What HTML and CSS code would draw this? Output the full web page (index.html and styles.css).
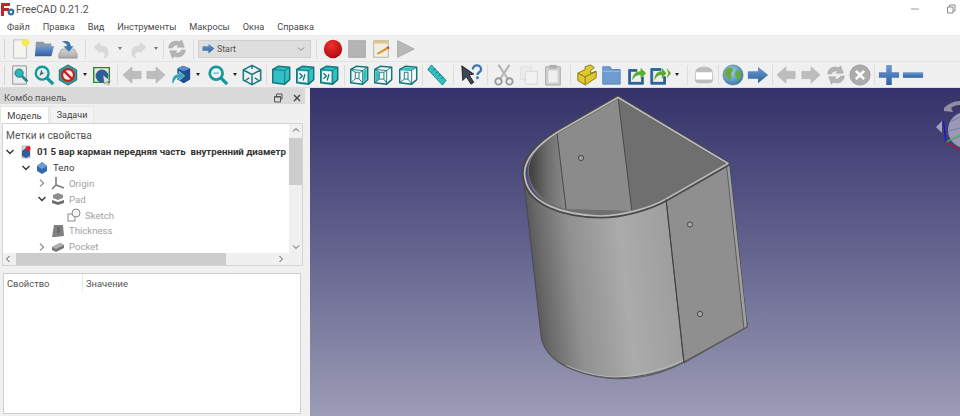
FILE: index.html
```html
<!DOCTYPE html>
<html lang="ru">
<head>
<meta charset="utf-8">
<title>FreeCAD 0.21.2</title>
<link rel="stylesheet" href="styles.css">
</head>
<body>
<svg class="defs" width="0" height="0" aria-hidden="true">
  <defs>
    <linearGradient id="gBlue" x1="0" y1="0" x2="0" y2="1"><stop offset="0" stop-color="#6f9bd0"/><stop offset="1" stop-color="#2f5f9f"/></linearGradient>
    <linearGradient id="gGray" x1="0" y1="0" x2="0" y2="1"><stop offset="0" stop-color="#d4d4d4"/><stop offset="1" stop-color="#a8a8a8"/></linearGradient>
    <linearGradient id="gTeal" x1="0" y1="0" x2="1" y2="1"><stop offset="0" stop-color="#45d0d4"/><stop offset="1" stop-color="#1c9ba0"/></linearGradient>
    <radialGradient id="gRed" cx=".4" cy=".3" r=".8"><stop offset="0" stop-color="#f03030"/><stop offset="1" stop-color="#a80808"/></radialGradient>
    <radialGradient id="gGlobe" cx=".4" cy=".35" r=".75"><stop offset="0" stop-color="#a9d3ef"/><stop offset="1" stop-color="#2c6fa8"/></radialGradient>
    <linearGradient id="body" gradientUnits="userSpaceOnUse" x1="524" y1="280" x2="690" y2="262">
      <stop offset="0" stop-color="#4a4a4a"/><stop offset=".12" stop-color="#6a6a6a"/><stop offset=".3" stop-color="#909090"/><stop offset=".6" stop-color="#ababab"/><stop offset="1" stop-color="#9a9a9a"/>
    </linearGradient>
    <linearGradient id="inner" gradientUnits="userSpaceOnUse" x1="528" y1="170" x2="566" y2="170">
      <stop offset="0" stop-color="#3a3a3a"/><stop offset=".5" stop-color="#6c6c6c"/><stop offset="1" stop-color="#8c8c8c"/>
    </linearGradient>
    <linearGradient id="sky" x1="0" y1="0" x2="0" y2="1"><stop offset="0" stop-color="#35316a"/><stop offset=".5" stop-color="#65648f"/><stop offset="1" stop-color="#9c9cb6"/></linearGradient>

    <symbol id="i-new" viewBox="0 0 24 24"><path d="M5 2h14v20H5z" fill="#f4f4f0" stroke="#bdbdbd"/><circle cx="18" cy="5" r="4" fill="#f5ea4e"/></symbol>
    <symbol id="i-open" viewBox="0 0 24 24"><path d="M3 4h8l2 2h7v4H3z" fill="#8c9aa8"/><path d="M3 9h20l-3 11H2z" fill="url(#gBlue)"/></symbol>
    <symbol id="i-save" viewBox="0 0 24 24"><path d="M5 12h14l3 6v4H2v-4z" fill="url(#gGray)" stroke="#8e8e8e" stroke-width=".6"/><path d="M5 4c6-2 10 0 10 5h3l-5 6-6-6h4c0-3-3-4-6-5z" fill="#3c78b8"/></symbol>
    <symbol id="i-undo" viewBox="0 0 24 24"><path d="M3 10l7-6v4c6 0 10 3 9 10-1 3-3 4-5 4 2-3 1-7-4-7v2z" fill="#d8d8d8"/></symbol>
    <symbol id="i-redo" viewBox="0 0 24 24"><path d="M21 10l-7-6v4c-6 0-10 3-9 10 1 3 3 4 5 4-2-3-1-7 4-7v2z" fill="#d8d8d8"/></symbol>
    <symbol id="i-sync" viewBox="0 0 24 24"><path d="M3 11C3 5 9 2 15 4l2-2 3 8h-8l2-2c-3-1-6 0-7 3zM21 13c0 6-6 9-12 7l-2 2-3-8h8l-2 2c3 1 6 0 7-3z" fill="#b4b4b4" stroke="#9c9c9c" stroke-width=".5"/></symbol>
    <symbol id="i-rec" viewBox="0 0 24 24"><circle cx="12" cy="12" r="10" fill="url(#gRed)"/></symbol>
    <symbol id="i-stop" viewBox="0 0 24 24"><rect x="3" y="3" width="18" height="18" fill="#b4b4b4" stroke="#a4a4a4"/></symbol>
    <symbol id="i-macro" viewBox="0 0 24 24"><path d="M4 3h16v18H4z" fill="#f1efe4" stroke="#b5b09a"/><path d="M4 3h16v3H4z" fill="#d9c98a"/><path d="M7 17l11-7 2 2-11 6z" fill="#d8913a"/><path d="M18 10l2 2 1.500-1-2-2z" fill="#c8382c"/></symbol>
    <symbol id="i-play" viewBox="0 0 24 24"><path d="M4 3l18 9-18 9z" fill="#b8b8b8" stroke="#a6a6a6"/></symbol>
    <symbol id="i-fit" viewBox="0 0 24 24"><path d="M4 2h15v20H4z" fill="#ececec" stroke="#8f8f8f"/><circle cx="11" cy="10" r="4.500" fill="#29b4b8" stroke="#127a80"/><path d="M14 13l6 6" stroke="#1a8a90" stroke-width="3"/></symbol>
    <symbol id="i-fitsel" viewBox="0 0 24 24"><circle cx="10" cy="10" r="7" fill="#dff3f3" stroke="#16989c" stroke-width="2.600"/><path d="M15 15l7 7" stroke="#16989c" stroke-width="3.500"/><path d="M7 13l2-7 2 4 3-1z" fill="#666"/></symbol>
    <symbol id="i-draw" viewBox="0 0 24 24"><path d="M12 1l9.500 5.500v11L12 23l-9.500-5.500v-11z" fill="#2aa0a4" stroke="#12666a"/><circle cx="12" cy="12" r="6.500" fill="#eee" stroke="#c81f1f" stroke-width="2.400"/><path d="M7.500 7.500l9 9" stroke="#c81f1f" stroke-width="2.400"/></symbol>
    <symbol id="i-cubeg" viewBox="0 0 24 24"><path d="M3 4h17v16H3z" fill="#dff0df" stroke="#1f8a2c" stroke-width="1.500"/><circle cx="12" cy="13" r="7" fill="#2c5f9a"/><path d="M13 12l8 6-3 1 2 3-1.500 1-2-3-2 2z" fill="#ddd" stroke="#555" stroke-width=".5"/></symbol>
    <symbol id="i-left" viewBox="0 0 24 24"><path d="M2 12l10-9v5h10v8H12v5z" fill="#bdbdbd" stroke="#adadad" stroke-width=".5"/></symbol>
    <symbol id="i-right" viewBox="0 0 24 24"><path d="M22 12L12 3v5H2v8h10v5z" fill="#bdbdbd" stroke="#adadad" stroke-width=".5"/></symbol>
    <symbol id="i-bcube" viewBox="0 0 24 24"><path d="M8 5l6-3 8 3v12l-7 4-7-4z" fill="#1f4f8f"/><path d="M8 5l7 3 7-3-8-3z" fill="#5b8ec8"/><path d="M2 21c0-7 3-10 8-10V8l6 5-6 5v-3c-3 0-5 2-6 6z" fill="#2fa6b8" stroke="#fff" stroke-width=".5"/></symbol>
    <symbol id="i-cyc" viewBox="0 0 24 24"><circle cx="10" cy="10" r="7" fill="none" stroke="#16989c" stroke-width="3"/><path d="M15 15l7 7" stroke="#16989c" stroke-width="3.500"/><path d="M7 10h6" stroke="#7fd0d2" stroke-width="2"/></symbol>
    <symbol id="i-iso" viewBox="0 0 24 24"><path d="M12 1.500l9.500 5v11l-9.500 5-9.500-5v-11zM2.500 6.500l9.500 5 9.500-5M12 11.500v11M12 1.500v4M5 18l4-3M19 18l-4-3" fill="none" stroke="#1d7f84" stroke-width="1.700"/></symbol>
    <symbol id="i-front" viewBox="0 0 24 24"><path d="M3 6L9 2.500 21.500 3.500V17L16 22 3 20.500Z" fill="#33c0c4" stroke="#15757a" stroke-width="1.600" stroke-linejoin="round"/><path d="M3 6L16 7 21.500 3.500M16 7V22" fill="none" stroke="#15757a"/></symbol>
    <symbol id="i-top" viewBox="0 0 24 24"><path d="M3 6L9 2.500 21.500 3.500V17L16 22 3 20.500Z" fill="#33c0c4" stroke="#15757a" stroke-width="1.600" stroke-linejoin="round"/><path d="M3 6L16 7 21.500 3.500M16 7V22" fill="none" stroke="#15757a"/><path d="M4.500 7.500l10 .7v12l-10-1z" fill="#f4fbfb"/><path d="M6 10l3 3-3 3M12 11l-2 7" stroke="#15757a" stroke-width="1.500" fill="none"/></symbol>
    <symbol id="i-right2" viewBox="0 0 24 24"><path d="M3 6L9 2.500 21.500 3.500V17L16 22 3 20.500Z" fill="#f4fbfb" stroke="#15757a" stroke-width="1.600" stroke-linejoin="round"/><path d="M3 6L16 7 21.500 3.500M16 7V22" fill="none" stroke="#15757a"/><path d="M16.500 8l4-3v11l-4 4z" fill="#33c0c4"/><path d="M3 6l5 3v7l-5 4.500M16 7l-4 3v6l4 5M8 9h4M8 16h4" fill="none" stroke="#15757a"/></symbol>
    <symbol id="i-rear" viewBox="0 0 24 24"><path d="M3 6L9 2.500 21.500 3.500V17L16 22 3 20.500Z" fill="#f4fbfb" stroke="#15757a" stroke-width="1.600" stroke-linejoin="round"/><path d="M3 6L16 7 21.500 3.500M16 7V22" fill="none" stroke="#15757a"/><path d="M4 7l5-3.500 11.500 1-4 1.800z" fill="#33c0c4"/><path d="M3 20.500l5-4h4l4 5M8 16.500V9h4v7.500" fill="none" stroke="#15757a"/></symbol>
    <symbol id="i-bottom" viewBox="0 0 24 24"><path d="M3 6L9 2.500 21.500 3.500V17L16 22 3 20.500Z" fill="#f4fbfb" stroke="#15757a" stroke-width="1.600" stroke-linejoin="round"/><path d="M3 6L16 7 21.500 3.500M16 7V22" fill="none" stroke="#15757a"/><path d="M4 7.500l3.500 2v7L4 19.500z" fill="#33c0c4"/><path d="M8 9h5v7.500H8zM3 6l5 3M16 7l-3 2M3 20.500l5-4M16 21l-3-4.500" fill="none" stroke="#15757a"/></symbol>
    <symbol id="i-rule" viewBox="0 0 24 24"><path d="M7 1l16 17-4 5L3 6z" fill="#35bcc0" stroke="#17868a"/><path d="M9 7l2-2M12 10l2-2M15 13l2-2M18 16l2-2" stroke="#0e5f62"/></symbol>
    <symbol id="i-what" viewBox="0 0 24 24"><path d="M2 2l13 9-5 1 5 8-3 2-5-8-4 4z" fill="#3b4754" stroke="#222"/><path d="M14 6c0-6 9-6 9 0 0 3-4 3-4 6" fill="none" stroke="#3f74b4" stroke-width="2.500"/><circle cx="19" cy="15" r="1.600" fill="#3f74b4"/></symbol>
    <symbol id="i-cut" viewBox="0 0 24 24"><path d="M6 1l10 15M18 1L8 16" stroke="#b4b4b4" stroke-width="2.200"/><circle cx="6" cy="19" r="3.500" fill="none" stroke="#9a9a9a" stroke-width="2"/><circle cx="18" cy="19" r="3.500" fill="none" stroke="#9a9a9a" stroke-width="2"/></symbol>
    <symbol id="i-copy" viewBox="0 0 24 24"><path d="M3 3h12v14H3z" fill="#ececec" stroke="#dedede"/><path d="M8 8h13v14H8z" fill="#f2f2f2" stroke="#d6d6d6"/></symbol>
    <symbol id="i-paste" viewBox="0 0 24 24"><path d="M4 3h16v20H4z" fill="#cfcfcf" stroke="#a8a8a8"/><path d="M8 1h8v4H8z" fill="#b0b0b0"/><path d="M7 7h10v13H7z" fill="#f0f0f0"/></symbol>
    <symbol id="i-part" viewBox="0 0 24 24"><path d="M2 10l8-4v-3l6-2 4 3-4 3v3l6-2v7l-12 8-8-5z" fill="#e0c92f" stroke="#7f7218"/><path d="M2 10l8 4 12-6M10 14v8" fill="none" stroke="#7f7218"/></symbol>
    <symbol id="i-fold" viewBox="0 0 24 24"><path d="M3 3h8l2 3h9v16H3z" fill="#6f9bd0" stroke="#5c85b5"/><path d="M3 8h19" stroke="#9dbfe4"/></symbol>
    <symbol id="i-link" viewBox="0 0 24 24"><path d="M4 6h9v2H6v12h12v-6h2v8H4z" fill="#2c6296" stroke="#2c6296"/><path d="M8 18c0-7 4-10 9-10V4l6 6-6 6v-4c-4 0-7 2-9 6z" fill="#5cab32"/></symbol>
    <symbol id="i-link2" viewBox="0 0 24 24"><path d="M2 5h11v2H4v13h12v-6h2v8H2z" fill="#2c6296" stroke="#2c6296"/><path d="M6 18c0-7 3-10 8-10V4l5 6-5 6v-4c-4 0-6 2-8 6z" fill="#5cab32"/><path d="M19 4l5 6-5 6 2-6z" fill="#5cab32"/></symbol>
    <symbol id="i-win" viewBox="0 0 24 24"><path d="M2 12C2 5 6 3 12 3s10 2 10 9v5c0 3-2 4-4 4H6c-2 0-4-1-4-4z" fill="#bdbdbd"/><rect x="3" y="9" width="18" height="8" fill="#fff"/></symbol>
    <symbol id="i-globe" viewBox="0 0 24 24"><circle cx="12" cy="12" r="11" fill="url(#gGlobe)" stroke="#4d6d80" stroke-width=".6"/><path d="M6 5c3-2 5-1 6 1 0 3-2 3-2 6 1 3-1 5-2 6-1-3-4-4-5-7 0-2 1-4 3-6zM15 8c3-2 5 0 6 3 0 4-2 7-4 8-1-2 0-4-1-5-2-1-3-3-1-6z" fill="#69ab3a"/></symbol>
    <symbol id="i-barrow" viewBox="0 0 24 24"><path d="M23 12L12 3v5H1v8h11v5z" fill="url(#gBlue)"/></symbol>
    <symbol id="i-xgray" viewBox="0 0 24 24"><circle cx="12" cy="12" r="11" fill="#acacac" stroke="#9c9c9c"/><path d="M7.500 7.500l9 9M16.500 7.500l-9 9" stroke="#fff" stroke-width="3"/></symbol>
    <symbol id="i-plus" viewBox="0 0 24 24"><path d="M9 1h6v8h8v6h-8v8H9v-8H1V9h8z" fill="url(#gBlue)"/></symbol>
    <symbol id="i-minus" viewBox="0 0 24 24"><rect x="1" y="9" width="22" height="6" fill="url(#gBlue)"/></symbol>

    <symbol id="t-doc" viewBox="0 0 14 14"><path d="M3 1h8v12H3z" fill="#d8d8d8" stroke="#9a9a9a" stroke-width=".6"/><path d="M3 6l4-3 4 3v5l-4 2-4-2z" fill="#2b5f9e"/><circle cx="9" cy="3.500" r="2.500" fill="#d8232a"/></symbol>
    <symbol id="t-body" viewBox="0 0 14 14"><path d="M2 5l5-4 5 4v5l-5 3-5-3z" fill="#2f6bb0"/><path d="M2 5l5 3 5-3-5-4z" fill="#6a9ed6"/></symbol>
    <symbol id="t-origin" viewBox="0 0 14 14"><path d="M5 1v8M5 9l8 3M5 9l-4 4" fill="none" stroke="#777" stroke-width="1.500"/></symbol>
    <symbol id="t-pad" viewBox="0 0 14 14"><path d="M2 3l5-2 5 2v3l-5 2-5-2z" fill="#8d8d8d"/><path d="M1 8l6 2 6-2v3l-6 2-6-2z" fill="#6e6e6e"/></symbol>
    <symbol id="t-sketch" viewBox="0 0 14 14"><rect x="1" y="6" width="7" height="7" fill="none" stroke="#8a8a8a"/><circle cx="9" cy="5" r="4" fill="#f4f4f4" stroke="#8a8a8a"/></symbol>
    <symbol id="t-thick" viewBox="0 0 14 14"><path d="M3 1h9l1 11-9 1H1z" fill="#808080"/><path d="M6 3h3v6H6z" fill="#6a6a6a"/></symbol>
    <symbol id="t-pocket" viewBox="0 0 14 14"><path d="M1 7l8-4 4 2v3l-8 4-4-2z" fill="#777"/><path d="M1 7l4 2 8-4-4-2z" fill="#b0b0b0"/></symbol>
  </defs>
</svg>

<div class="app">
  <header class="titlebar">
    <svg class="logo" viewBox="0 0 14 14"><path d="M0 1h9v3H3v2h5v3H3v5H0z" fill="#c4232b"/><circle cx="10" cy="10" r="3.400" fill="#3c6f9e"/><circle cx="10" cy="10" r="1.200" fill="#fff"/></svg>
    <span class="title">FreeCAD 0.21.2</span>
    <span class="winbtns">
      <svg class="wb" viewBox="0 0 10 10"><path d="M1 5h8" stroke="#9a9a9a"/></svg>
      <svg class="wb" viewBox="0 0 10 10"><path d="M1.500 3h5.500v6H1.500zM3.500 3V1H9v6H7" fill="none" stroke="#8a8a8a"/></svg>
    </span>
  </header>

  <nav class="menubar">
    <span>Файл</span><span>Правка</span><span>Вид</span><span>Инструменты</span><span>Макросы</span><span>Окна</span><span>Справка</span>
  </nav>

  <div class="toolbar tb1">
    <i class="grip"></i>
    <svg class="ic"><use href="#i-new"/></svg>
    <svg class="ic"><use href="#i-open"/></svg>
    <svg class="ic"><use href="#i-save"/></svg>
    <i class="sep s1"></i>
    <svg class="ic"><use href="#i-undo"/></svg>
    <i class="drop dim"></i>
    <svg class="ic g1"><use href="#i-redo"/></svg>
    <i class="drop dim"></i>
    <i class="sep s2"></i>
    <svg class="ic"><use href="#i-sync"/></svg>
    <i class="sep s3"></i>
    <div class="combo">
      <svg class="cmb-ic" viewBox="0 0 24 24"><use href="#i-barrow"/></svg>
      <span>Start</span>
      <svg class="cmb-ch" viewBox="0 0 10 10"><path d="M2 3.500l3 3 3-3" fill="none" stroke="#888"/></svg>
    </div>
    <i class="sep s4"></i>
    <svg class="ic"><use href="#i-rec"/></svg>
    <svg class="ic"><use href="#i-stop"/></svg>
    <svg class="ic"><use href="#i-macro"/></svg>
    <svg class="ic"><use href="#i-play"/></svg>
  </div>

  <div class="toolbar tb2">
    <i class="grip"></i>
    <svg class="ic"><use href="#i-fit"/></svg>
    <svg class="ic"><use href="#i-fitsel"/></svg>
    <svg class="ic"><use href="#i-draw"/></svg>
    <i class="drop"></i>
    <svg class="ic"><use href="#i-cubeg"/></svg>
    <i class="sep w6"></i>
    <svg class="ic"><use href="#i-left"/></svg>
    <svg class="ic"><use href="#i-right"/></svg>
    <svg class="ic g1"><use href="#i-bcube"/></svg>
    <i class="drop"></i>
    <i class="sep w3 off"></i>
    <svg class="ic"><use href="#i-cyc"/></svg>
    <i class="drop"></i>
    <svg class="ic"><use href="#i-iso"/></svg>
    <i class="sep w5"></i>
    <svg class="ic"><use href="#i-front"/></svg>
    <svg class="ic"><use href="#i-top"/></svg>
    <svg class="ic"><use href="#i-top"/></svg>
    <i class="sep w6"></i>
    <svg class="ic"><use href="#i-right2"/></svg>
    <svg class="ic"><use href="#i-bottom"/></svg>
    <svg class="ic g1"><use href="#i-rear"/></svg>
    <i class="sep w4"></i>
    <svg class="ic"><use href="#i-rule"/></svg>
    <i class="sep w11"></i>
    <svg class="ic"><use href="#i-what"/></svg>
    <i class="sep w9"></i>
    <svg class="ic"><use href="#i-cut"/></svg>
    <svg class="ic g1"><use href="#i-copy"/></svg>
    <svg class="ic"><use href="#i-paste"/></svg>
    <i class="sep w10"></i>
    <svg class="ic"><use href="#i-part"/></svg>
    <svg class="ic"><use href="#i-fold"/></svg>
    <svg class="ic g1"><use href="#i-link"/></svg>
    <svg class="ic"><use href="#i-link2"/></svg>
    <i class="drop"></i>
    <i class="sep w10"></i>
    <svg class="ic"><use href="#i-win"/></svg>
    <i class="sep w5"></i>
    <svg class="ic"><use href="#i-globe"/></svg>
    <svg class="ic g1"><use href="#i-barrow"/></svg>
    <i class="sep w4"></i>
    <svg class="ic"><use href="#i-left"/></svg>
    <svg class="ic g1"><use href="#i-right"/></svg>
    <svg class="ic g1"><use href="#i-sync"/></svg>
    <svg class="ic"><use href="#i-xgray"/></svg>
    <i class="sep w5"></i>
    <svg class="ic"><use href="#i-plus"/></svg>
    <svg class="ic"><use href="#i-minus"/></svg>
  </div>

  <main class="workspace">
    <aside class="panel">
      <div class="dock-head">
        <span>Комбо панель</span>
        <span class="dock-btns">
          <svg class="db" viewBox="0 0 10 10"><path d="M1.500 3.500h6v5.500h-6zM3.500 3.500V1H9v5H7.500" fill="none" stroke="#555"/><path d="M1.500 4h6" stroke="#555"/></svg>
          <svg class="db" viewBox="0 0 10 10"><path d="M2 2l6 6M8 2l-6 6" stroke="#444" stroke-width="1.400"/></svg>
        </span>
      </div>
      <div class="tabs">
        <span class="tab on">Модель</span>
        <span class="tab">Задачи</span>
      </div>
      <section class="treebox">
        <div class="tree">
          <div class="tree-head">Метки и свойства</div>
          <div class="row l0"><svg class="chev" viewBox="0 0 10 10"><path d="M1.500 3l3.500 3.500L8.500 3" /></svg><svg class="ti"><use href="#t-doc"/></svg><b>01 5 вар карман передняя часть  внутренний диаметр</b></div>
          <div class="row l1"><svg class="chev" viewBox="0 0 10 10"><path d="M1.500 3l3.500 3.500L8.500 3" /></svg><svg class="ti"><use href="#t-body"/></svg><span>Тело</span></div>
          <div class="row l2 dim"><svg class="chev lite" viewBox="0 0 10 10"><path d="M3 1.500L6.500 5 3 8.500" /></svg><svg class="ti"><use href="#t-origin"/></svg><span>Origin</span></div>
          <div class="row l2 dim"><svg class="chev" viewBox="0 0 10 10"><path d="M1.500 3l3.500 3.500L8.500 3" /></svg><svg class="ti"><use href="#t-pad"/></svg><span>Pad</span></div>
          <div class="row l3 dim"><i class="chev"></i><svg class="ti"><use href="#t-sketch"/></svg><span>Sketch</span></div>
          <div class="row l2 dim"><i class="chev"></i><svg class="ti"><use href="#t-thick"/></svg><span>Thickness</span></div>
          <div class="row l2 dim"><svg class="chev lite" viewBox="0 0 10 10"><path d="M3 1.500L6.500 5 3 8.500" /></svg><svg class="ti"><use href="#t-pocket"/></svg><span>Pocket</span></div>
        </div>
        <div class="vscroll">
          <svg class="sa" viewBox="0 0 10 10"><path d="M2 6.500l3-3 3 3" /></svg>
          <div class="vtrack"><div class="vthumb"></div></div>
          <svg class="sa" viewBox="0 0 10 10"><path d="M2 3.500l3 3 3-3" /></svg>
        </div>
        <div class="hscroll">
          <svg class="sa" viewBox="0 0 10 10"><path d="M6.500 2l-3 3 3 3" /></svg>
          <div class="hthumb"></div>
          <svg class="sa end" viewBox="0 0 10 10"><path d="M3.500 2l3 3-3 3" /></svg>
        </div>
        <div class="corner"></div>
      </section>
      <section class="props">
        <div class="props-head"><span class="c1">Свойство</span><span class="c2">Значение</span></div>
      </section>
    </aside>
    <svg class="viewer" viewBox="310 88 650 328" preserveAspectRatio="none">
      <rect x="310" y="88" width="650" height="328" fill="url(#sky)"/>
      <!-- solid body -->
      <path d="M523 173 L541 336 C543 352 556 362 572 369 C592 377 612 379 632 377 C650 375 668 370 684 362 L747 327 L729 163 L666 199 C650 208 622 216 600 215 C570 214 530 206 523 173Z" fill="url(#body)" stroke="#444" stroke-width=".8"/>
      <path d="M666 199 L684 363 L747 327 L729 163Z" fill="#8f8f8f" stroke="#444" stroke-width=".8"/>
      <path d="M729 163 L747 327 L744 329 L726 165Z" fill="#a0a0a0"/>
      <path d="M726.500 165 L744 329" stroke="#4a4a4a" stroke-width=".8" fill="none"/>
      <path d="M542 340 C546 354 558 364 574 370 C594 378 614 380 634 378 C652 376 670 370 684 362 L747 327 L748 322" fill="none" stroke="#5a5a5a" stroke-width="1.200"/>
      <path d="M566 365 C578 371 594 376 614 377 C634 377 660 371 684 360" fill="none" stroke="#c4c4c4" stroke-width=".7"/>
      <!-- interior -->
      <path d="M557 133 L618 97 L729 163 L666 199 C650 208 622 216 600 215 C566 214 530 206 528 172 C527 156 540 143 557 133Z" fill="#6f6f6f"/>
      <path d="M557 133 L618 97 L632 211 L566 209Z" fill="#8b8b8b"/>
      <path d="M557 133 L566 209 C544 202 530 190 529 172 C528 156 542 142 557 133Z" fill="url(#inner)"/>
      <path d="M618 97 L632 212M557 133 L566 209" stroke="#3a3a3a" stroke-width=".8" fill="none"/>
      <!-- rim -->
      <path d="M618 97 L557 132 C538 143 524 157 523 173 C524 206 566 216 600 217 C622 217 650 209 666 200 L729 164 Z" fill="none" stroke="#484848" stroke-width="3.200" stroke-linejoin="round"/>
      <path d="M618 97.500 L557 132.500 C539 144 525 158 524.500 173 C525.500 205 566 215 600 216 C622 216 650 208 666 199 L728 163.500 Z" fill="none" stroke="#bcbcbc" stroke-width="1.700" stroke-linejoin="round"/>
      <path d="M666 199 L684 363" stroke="#3a3a3a" stroke-width=".9"/>
      <!-- holes -->
      <circle cx="581" cy="158" r="2.600" fill="#a0a0a0" stroke="#3c3c3c" stroke-width=".9"/>
      <circle cx="690" cy="224.500" r="2.600" fill="#a8a8a8" stroke="#3c3c3c" stroke-width=".9"/>
      <circle cx="700" cy="314" r="2.600" fill="#a8a8a8" stroke="#3c3c3c" stroke-width=".9"/>
      <!-- navigation gizmo -->
      <circle cx="966" cy="130" r="18" fill="#9a9ab8"/>
      <path d="M950 122l10-5M949 131l11-3M952 140l8-4" stroke="#7c7c9a" fill="none"/>
      <path d="M944 108c4-4 10-7 16-7v4c-4 0-7 1-9 3l2 4-9-1z" fill="#8f8fa4"/>
      <path d="M936 127l6-6v12z" fill="#a0a0b8"/>
      <path d="M943.500 121l2.500 21" stroke="#1616d8" stroke-width="1.300" fill="none"/>
      <path d="M946.500 142l13-7" stroke="#40c040" stroke-width="1.200" fill="none"/>
      <path d="M946.500 143l13.500 7" stroke="#a81c2c" stroke-width="1.300" fill="none"/>
    </svg>
  </main>
</div>
</body>
</html>
```

FILE: styles.css
```css
* { box-sizing: border-box; }
html, body { margin: 0; padding: 0; }
body {
  width: 960px;
  height: 416px;
  overflow: hidden;
  background: #f0f0f0;
  font-family: Roboto, "Noto Sans", "Liberation Sans", sans-serif;
  font-size: 9.6px;
  color: #3c3c3c;
}
.defs { display: block; height: 0; }
i { display: block; font-style: normal; }
.app { display: flex; flex-direction: column; width: 960px; height: 416px; }

.titlebar { height: 18px; flex: none; display: flex; align-items: center; background: #fff; padding-left: 1px; }
.logo { width: 14px; height: 14px; flex: none; margin-right: 1px; }
.title { font-size: 10.5px; color: #555; }
.winbtns { margin-left: auto; display: flex; gap: 26px; padding-right: 4px; }
.wb { width: 10px; height: 10px; display: block; }

.menubar { height: 17px; flex: none; display: flex; gap: 13px; align-items: center; padding-left: 7px; background: #fff; font-size: 9.2px; color: #4a4a4a; }

.toolbar { height: 26px; flex: none; display: flex; align-items: center; background: #f0f0f0; }
.tb1 { height: 27px; border-top: 1px solid #ececec; border-bottom: 1px solid #e4e4e4; }
.tb2 { height: 26px; border-bottom: 1px solid #dcdcdc; }
.grip { width: 8px; height: 20px; background: linear-gradient(90deg, transparent 4px, #d6d6d6 4px, #d6d6d6 5px, transparent 5px); flex: none; }
.ic { width: 24px; height: 22px; flex: none; display: block; }
.ic.g1 { margin-left: 1px; }
.drop { width: 0; height: 0; flex: none; margin: 0 3px 0 3px; border-left: 2.500px solid transparent; border-right: 2.500px solid transparent; border-top: 3px solid #222; }
.drop.dim { border-top-color: #777; margin: 0 3px 0 4px; }
.sep { flex: none; height: 20px; background: linear-gradient(#dcdcdc, #dcdcdc) center / 1px 100% no-repeat; }
.sep.off { background: none; }
.w3 { width: 3px; } .w4 { width: 4px; } .w5 { width: 5px; } .w6 { width: 6px; }
.w9 { width: 9px; } .w10 { width: 10px; } .w11 { width: 11px; }
.s1 { width: 10px; } .s2 { width: 4px; } .s3 { width: 9px; } .s4 { width: 10px; }

.combo { width: 113px; height: 18px; flex: none; display: flex; align-items: center; gap: 2px; padding: 0 4px 0 3px; background: #dedede; border: 1px solid #cfcfcf; color: #555; font-size: 8.8px; }
.cmb-ic { width: 13px; height: 13px; flex: none; }
.cmb-ch { width: 10px; height: 10px; margin-left: auto; }

.workspace { flex: 1; min-height: 0; display: flex; }
.panel { width: 310px; flex: none; display: flex; flex-direction: column; padding-right: 5px; background: #f0f0f0; }
.viewer { flex: 1; height: 100%; display: block; min-width: 0; }

.dock-head { height: 16px; flex: none; display: flex; align-items: center; padding: 3px 3px 0 4px; background: #d9d9d9; color: #555; font-size: 9.4px; }
.dock-btns { margin-left: auto; display: flex; gap: 9px; }
.db { width: 10px; height: 10px; display: block; }

.tabs { height: 19px; flex: none; display: flex; align-items: flex-end; padding-top: 2px; }
.tab { width: 44px; height: 17px; display: flex; align-items: center; justify-content: center; background: #f3f3f3; border: 1px solid #e6e6e6; border-bottom: 0; font-size: 9px; color: #444; margin-left: 1px; }
.tab.on { width: 49px; background: #fff; margin-left: 0; font-size: 9.4px; }

.treebox { height: 143px; flex: none; margin: 0 2px; background: #fff; border: 1px solid #d4d4d4; display: grid; grid-template-columns: 1fr 13px; grid-template-rows: 1fr 12px; }
.tree { overflow: hidden; min-width: 0; padding-top: 2px; }
.tree-head { height: 18px; padding-left: 3px; display: flex; align-items: center; color: #555; font-size: 10.2px; }
.row { height: 15.800px; display: flex; align-items: center; white-space: pre; }
.row b { font-weight: 700; color: #333; font-size: 9.7px; }
.row.dim { color: #a2a2a2; }
.l0 { padding-left: 2px; } .l1 { padding-left: 18px; } .l2 { padding-left: 34px; } .l3 { padding-left: 50px; }
.chev { width: 10px; height: 10px; flex: none; margin-right: 4px; fill: none; stroke: #333; stroke-width: 1.400; }
.chev.lite { stroke: #9a9a9a; }
.ti { width: 14px; height: 14px; flex: none; margin-right: 4px; }

.vscroll { background: #f0f0f0; display: flex; flex-direction: column; align-items: center; }
.sa { width: 10px; height: 12px; flex: none; fill: none; stroke: #555; stroke-width: 1; }
.vtrack { flex: 1; width: 100%; }
.vthumb { height: 47px; margin-top: 2px; background: #cdcdcd; }
.hscroll { background: #f0f0f0; display: flex; align-items: center; padding-right: 3px; }
.hthumb { width: 210px; height: 100%; margin-left: 3px; background: #cdcdcd; }
.sa.end { margin-left: auto; }
.corner { background: #f0f0f0; }

.props { flex: 1; min-height: 0; margin: 7px 4px 2px 3px; background: #fff; border: 1px solid #cfcfcf; }
.props-head { height: 18px; display: flex; align-items: center; color: #555; font-size: 9.4px; }
.c1 { width: 79px; padding-left: 3px; height: 100%; display: flex; align-items: center; border-right: 1px solid #ececec; }
.c2 { padding-left: 3px; }
```
